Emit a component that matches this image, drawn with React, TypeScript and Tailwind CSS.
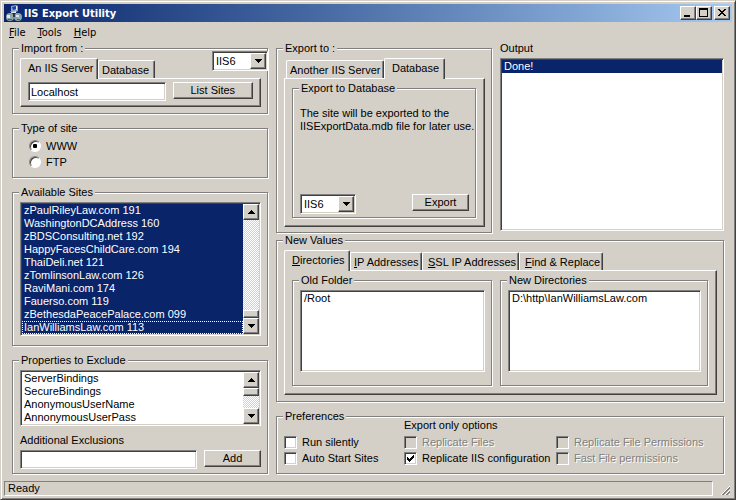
import { useState, type ReactNode } from "react";
import clsx from "clsx";

const sunken =
  "border border-t-[#808080] border-l-[#808080] border-r-white border-b-white p-px shadow-[inset_1px_1px_0_#404040,inset_-1px_-1px_0_#d4d0c8]";
const raised =
  "border border-t-white border-l-white border-r-[#404040] border-b-[#404040] bg-[#d4d0c8] shadow-[inset_-1px_-1px_0_#808080]";

const sites = [
  "zPaulRileyLaw.com 191",
  "WashingtonDCAddress 160",
  "zBDSConsulting.net 192",
  "HappyFacesChildCare.com 194",
  "ThaiDeli.net 121",
  "zTomlinsonLaw.com 126",
  "RaviMani.com 174",
  "Fauerso.com 119",
  "zBethesdaPeacePalace.com 099",
  "IanWilliamsLaw.com 113",
];

const properties = [
  "ServerBindings",
  "SecureBindings",
  "AnonymousUserName",
  "AnnonymousUserPass",
];

interface BoxProps {
  className?: string;
  children?: ReactNode;
}

function Group({
  title,
  className,
  children,
}: BoxProps & { title: string }) {
  return (
    <fieldset
      className={clsx(
        "relative min-w-0 border border-[#808080] pr-1.5 pl-[7px] shadow-[inset_1px_1px_0_#fff,inset_-1px_-1px_0_#d4d0c8,1px_1px_0_#fff]",
        className,
      )}
    >
      <legend className="-ml-px bg-[#d4d0c8] px-0.5">{title}</legend>
      {children}
    </fieldset>
  );
}

function PushButton({ className, children }: BoxProps) {
  return (
    <button
      type="button"
      className={clsx(
        raised,
        "flex h-[17px] items-center justify-center",
        className,
      )}
    >
      {children}
    </button>
  );
}

function Tab({
  active,
  className,
  children,
}: BoxProps & { active?: boolean }) {
  return (
    <button
      type="button"
      role="tab"
      aria-selected={!!active}
      className={clsx(
        "rounded-t-[2px] border-t border-r border-l border-t-white border-r-[#404040] border-l-white bg-[#d4d0c8] text-left whitespace-nowrap shadow-[inset_-1px_0_0_#808080]",
        active ? "relative -mb-px h-[21px] pb-0.5 pl-[7px]" : "h-[18px] pt-0.5 pl-[3px]",
        className,
      )}
    >
      {children}
    </button>
  );
}

function TabPanel({ className, children }: BoxProps) {
  return (
    <div role="tabpanel" className={clsx(raised, className)}>
      {children}
    </div>
  );
}

function Arrow({ up }: { up?: boolean }) {
  return (
    <svg
      width="7"
      height="4"
      viewBox="0 0 7 4"
      shapeRendering="crispEdges"
      aria-hidden="true"
    >
      <path d={up ? "M3 0h1v1h1v1h1v1h1v1H0V3h1V2h1V1h1z" : "M0 0h7v1H6v1H5v1H4v1H3V3H2V2H1V1H0z"} />
    </svg>
  );
}

function VersionSelect({ label, className }: { label: string; className?: string }) {
  return (
    <div className={clsx("w-14", className)}>
      <select
        aria-label={label}
        className={clsx(sunken, "block h-5 w-full appearance-none bg-white pl-[3px]")}
      >
        <option>IIS6</option>
        <option>IIS5</option>
      </select>
      <span
        className={clsx(
          raised,
          "pointer-events-none absolute top-0.5 right-0.5 flex h-4 w-4 items-center justify-center",
        )}
      >
        <Arrow />
      </span>
    </div>
  );
}

function ScrollBar({ atEnd }: { atEnd?: boolean }) {
  return (
    <div className="flex w-4 shrink-0 flex-col bg-[repeating-conic-gradient(#fff_0_25%,#d4d0c8_0_50%)] bg-[size:2px_2px]">
      <button
        type="button"
        aria-label="Scroll up"
        className={clsx(raised, "flex h-4 items-center justify-center")}
      >
        <Arrow up />
      </button>
      <div className={clsx(raised, "h-2", atEnd && "mt-auto")} />
      <button
        type="button"
        aria-label="Scroll down"
        className={clsx(
          raised,
          "flex h-4 items-center justify-center",
          !atEnd && "mt-auto",
        )}
      >
        <Arrow />
      </button>
    </div>
  );
}

function ListBox({
  label,
  items,
  selected,
  className,
  children,
}: BoxProps & { label: string; items: string[]; selected?: boolean }) {
  return (
    <div className={clsx(sunken, "flex bg-white", className)}>
      <ul
        role="listbox"
        aria-label={label}
        aria-multiselectable="true"
        className="min-w-0 flex-1"
      >
        {items.map((item, i) => (
          <li
            key={item}
            role="option"
            aria-selected={!!selected}
            className={clsx(
              "truncate pl-0.5",
              selected && "bg-[#0a246a] text-white",
              selected &&
                items.length > 1 &&
                i === items.length - 1 &&
                "outline-1 -outline-offset-1 outline-white outline-dotted",
            )}
          >
            {item}
          </li>
        ))}
      </ul>
      {children}
    </div>
  );
}

function Check({
  label,
  disabled,
  defaultChecked,
}: {
  label: string;
  disabled?: boolean;
  defaultChecked?: boolean;
}) {
  return (
    <label
      className={clsx(
        "relative flex h-4 items-center gap-[5px] whitespace-nowrap",
        disabled && "text-[#808080] [text-shadow:1px_1px_0_#fff]",
      )}
    >
      <input
        type="checkbox"
        disabled={disabled}
        defaultChecked={defaultChecked}
        className={clsx(
          sunken,
          "peer size-[13px] shrink-0 appearance-none bg-white disabled:bg-[#d4d0c8]",
        )}
      />
      <svg
        width="7"
        height="7"
        viewBox="0 0 7 7"
        shapeRendering="crispEdges"
        aria-hidden="true"
        className="absolute left-[3px] hidden peer-checked:block"
      >
        <path d="M0 2h1v1h1v1h1V3h1V2h1V1h1V0h1v3H6v1H5v1H4v1H3v1H2V6H1V5H0z" />
      </svg>
      {label}
    </label>
  );
}

function Radio({
  label,
  checked,
  onChange,
}: {
  label: string;
  checked: boolean;
  onChange: () => void;
}) {
  return (
    <label className="relative flex h-4 items-center gap-[5px]">
      <input
        type="radio"
        name="site-type"
        checked={checked}
        onChange={onChange}
        className="peer size-3 appearance-none rounded-full border border-t-[#808080] border-r-white border-b-white border-l-[#808080] bg-white shadow-[inset_1px_1px_0_#404040]"
      />
      <span className="absolute left-1 hidden size-1 rounded-[1px] bg-black peer-checked:block" />
      {label}
    </label>
  );
}

function AppIcon() {
  return (
    <svg width="16" height="16" viewBox="0 0 16 16" aria-hidden="true">
      <path d="M6 7 3 10M9 7l3 3" stroke="#c8d4dc" strokeWidth="1" />
      <path d="M5 1l5-1 2 1v5L8 8 5 6z" fill="#8fa8c8" />
      <path d="M6 2l4-1v3L7 5z" fill="#1c3fc0" />
      <path d="M10 1h1v4h-1z" fill="#e4e8ea" />
      <path d="M4 6l3 1 3-1v2H6z" fill="#e4e8ea" />
      <circle cx="4" cy="12" r="4" fill="#93a0a6" />
      <circle cx="12" cy="12" r="4" fill="#93a0a6" />
      <path d="M1 10h3v3H1zM10 10h3v2h-3z" fill="#dfe6e8" />
      <path d="M4 11h2v3H4zM12 12h3v2h-3z" fill="#7fb4bc" />
      <path d="M2 14h4v1H2zM11 14h3v1h-3z" fill="#4b5f68" />
      <path d="M7 9h2v3H7z" fill="#26344c" />
    </svg>
  );
}

function TitleBar() {
  return (
    <header className="flex h-[18px] items-center bg-linear-to-r from-[#0a246a] to-[#a6caf0] pr-0.5 pl-0.5">
      <AppIcon />
      <h1 className="ml-0.5 flex-1 font-['DejaVu_Sans_Condensed','DejaVu_Sans',sans-serif] text-[11px] font-bold text-white">
        IIS Export Utility
      </h1>
      <button
        type="button"
        aria-label="Minimize"
        className={clsx(raised, "flex h-3.5 w-4 justify-start pt-2 pl-[3px]")}
      >
        <span className="h-0.5 w-1.5 bg-black" />
      </button>
      <button
        type="button"
        aria-label="Maximize"
        className={clsx(raised, "flex h-3.5 w-4 justify-start pt-px pl-0.5")}
      >
        <span className="h-[9px] w-[9px] border border-t-2 border-black" />
      </button>
      <button
        type="button"
        aria-label="Close"
        className={clsx(raised, "ml-0.5 flex h-3.5 w-4 justify-start pt-0.5 pl-[3px]")}
      >
        <svg width="8" height="7" viewBox="0 0 8 7" shapeRendering="crispEdges">
          <path d="M0 0h2v1h1v1h2V1h1V0h2v1H7v1H6v1H5v1h1v1h1v1h1v1H6V6H5V5H3v1H2v1H0V6h1V5h1V4h1V3H2V2H1V1H0z" />
        </svg>
      </button>
    </header>
  );
}

function MenuBar() {
  return (
    <nav className="flex h-5 items-center gap-3 pl-[5px] font-['DejaVu_Sans_Condensed','DejaVu_Sans',sans-serif] text-[11px]">
      <button type="button"><u>F</u>ile</button>
      <button type="button"><u>T</u>ools</button>
      <button type="button"><u>H</u>elp</button>
    </nav>
  );
}

function ImportColumn() {
  const [siteType, setSiteType] = useState("WWW");

  return (
    <div className="flex min-w-0 flex-col gap-2">
      <Group title="Import from :" className="pt-[3px] pb-1.5">
        <VersionSelect label="Import version" className="absolute -top-1 -right-px" />
        <div role="tablist" className="flex items-end">
          <Tab active className="w-[78px]">An IIS Server</Tab>
          <Tab className="w-[57px]">Database</Tab>
        </div>
        <TabPanel className="flex items-start gap-[7px] px-[7px] pt-[3px] pb-[5px]">
          <input
            type="text"
            aria-label="Server"
            defaultValue="Localhost"
            className={clsx(sunken, "h-[19px] min-w-0 flex-[137] bg-white pl-0.5")}
          />
          <PushButton className="flex-[81]">List Sites</PushButton>
        </TabPanel>
      </Group>

      <Group title="Type of site" className="pt-[3px] pb-[7px]">
        <div className="pl-[9px]">
          {["WWW", "FTP"].map((type) => (
            <Radio
              key={type}
              label={type}
              checked={siteType === type}
              onChange={() => setSiteType(type)}
            />
          ))}
        </div>
      </Group>

      <Group title="Available Sites" className="pt-[3px] pb-[9px]">
        <ListBox label="Available Sites" items={sites} selected>
          <ScrollBar atEnd />
        </ListBox>
      </Group>

      <Group title="Properties to Exclude" className="pt-[3px] pb-1">
        <ListBox label="Properties to Exclude" items={properties}>
          <ScrollBar />
        </ListBox>
        <label htmlFor="exclusions" className="mt-2 mb-[3px] block">
          Additional Exclusions
        </label>
        <div className="flex items-start gap-[7px]">
          <input
            id="exclusions"
            type="text"
            className={clsx(sunken, "h-[19px] min-w-0 flex-1 bg-white")}
          />
          <PushButton className="w-[57px]">Add</PushButton>
        </div>
      </Group>
    </div>
  );
}

function ExportGroup() {
  return (
    <Group title="Export to :" className="pt-[3px] pb-[5px]">
      <div role="tablist" className="flex items-end pl-0.5">
        <Tab className="w-[98px]">Another IIS Server</Tab>
        <Tab active className="w-[61px]">Database</Tab>
      </div>
      <TabPanel className="pt-[3px] pr-2 pb-2 pl-[7px]">
        <Group title="Export to Database" className="pt-3 pb-[3px]">
          <p className="whitespace-nowrap">
            The site will be exported to the
            <br />
            IISExportData.mdb file for later use.
          </p>
          <div className="mt-[61px] flex items-start justify-between">
            <VersionSelect label="Export version" className="relative" />
            <PushButton className="w-[57px]">Export</PushButton>
          </div>
        </Group>
      </TabPanel>
    </Group>
  );
}

function NewValuesGroup() {
  const folders = [
    { title: "Old Folder", value: "/Root" },
    { title: "New Directories", value: "D:\\http\\IanWilliamsLaw.com" },
  ];

  return (
    <Group title="New Values" className="pt-[3px] pb-1.5">
      <div role="tablist" className="flex items-end">
        <Tab active className="w-[66px]"><u>D</u>irectories</Tab>
        <Tab className="w-[72px]"><u>I</u>P Addresses</Tab>
        <Tab className="w-[97px] pl-[5px]"><u>S</u>SL IP Addresses</Tab>
        <Tab className="w-[84px] pl-[5px]"><u>F</u>ind &amp; Replace</Tab>
      </div>
      <TabPanel className="grid grid-cols-[200fr_208fr] gap-2 pt-[3px] pr-2 pb-2 pl-[7px]">
        {folders.map(({ title, value }) => (
          <Group key={title} title={title} className="pt-[3px] pb-[13px]">
            <textarea
              aria-label={title}
              defaultValue={value}
              className={clsx(sunken, "block h-[82px] w-full resize-none bg-white pl-[3px]")}
            />
          </Group>
        ))}
      </TabPanel>
    </Group>
  );
}

function PreferencesGroup() {
  return (
    <Group title="Preferences" className="pb-[7px]">
      <div className="-mt-1 grid grid-cols-[120fr_152fr_161fr]">
        <p className="col-start-2 mb-0.5">Export only options</p>
        <div className="col-start-1">
          <Check label="Run silently" />
          <Check label="Auto Start Sites" />
        </div>
        <div>
          <Check label="Replicate Files" disabled />
          <Check label="Replicate IIS configuration" defaultChecked />
        </div>
        <div>
          <Check label="Replicate File Permissions" disabled />
          <Check label="Fast File permissions" disabled />
        </div>
      </div>
    </Group>
  );
}

function StatusBar() {
  return (
    <footer className="mt-[7px] flex items-end">
      <p className="h-[15px] flex-1 border border-t-[#808080] border-r-white border-b-white border-l-[#808080] pl-[3px]">
        Ready
      </p>
      <svg width="19" height="12" viewBox="0 0 19 12" aria-hidden="true">
        <path d="M8 11l9-9M12 11l5-5M16 11l1-1" stroke="#fff" />
        <path d="M9 11l8-8M10 11l7-7M13 11l4-4M14 11l3-3" stroke="#808080" />
      </svg>
    </footer>
  );
}

export default function App() {
  return (
    <div className="flex min-h-screen flex-col border border-[#d4d0c8] border-r-[#404040] border-b-[#404040] bg-[#d4d0c8] p-[3px] font-['Liberation_Sans',Arial,sans-serif] text-[11px]/[13px] text-black shadow-[inset_1px_1px_0_#fff,inset_-1px_-1px_0_#808080]">
      <TitleBar />
      <MenuBar />
      <main className="grid flex-1 grid-cols-[256fr_448fr] gap-2 px-2">
        <ImportColumn />
        <div className="flex min-w-0 flex-col">
          <div className="mb-px grid grid-cols-[216fr_224fr] gap-2">
            <ExportGroup />
            <section className="flex flex-col pb-0.5">
              <h2 className="mb-[3px]">Output</h2>
              <ListBox label="Output" items={["Done!"]} selected className="flex-1" />
            </section>
          </div>
          <NewValuesGroup />
          <div className="mt-2">
            <PreferencesGroup />
          </div>
        </div>
      </main>
      <StatusBar />
    </div>
  );
}
